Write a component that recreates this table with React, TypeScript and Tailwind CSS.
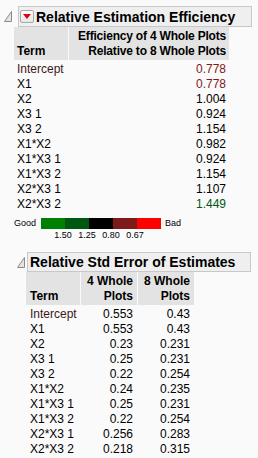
import React from "react";

const efficiency: [string, string][] = [
  ["Intercept", "0.778"],
  ["X1", "0.778"],
  ["X2", "1.004"],
  ["X3 1", "0.924"],
  ["X3 2", "1.154"],
  ["X1*X2", "0.982"],
  ["X1*X3 1", "0.924"],
  ["X1*X3 2", "1.154"],
  ["X2*X3 1", "1.107"],
  ["X2*X3 2", "1.449"],
];

const stdErrors: [string, string, string][] = [
  ["Intercept", "0.553", "0.43"],
  ["X1", "0.553", "0.43"],
  ["X2", "0.23", "0.231"],
  ["X3 1", "0.25", "0.231"],
  ["X3 2", "0.22", "0.254"],
  ["X1*X2", "0.24", "0.235"],
  ["X1*X3 1", "0.25", "0.231"],
  ["X1*X3 2", "0.22", "0.254"],
  ["X2*X3 1", "0.256", "0.283"],
  ["X2*X3 2", "0.218", "0.315"],
];

// colour bins from the legend: >=1.50 green, >=1.25 dark green, >=0.80 black, >=0.67 dark red
function valueColor(v: string) {
  const n = parseFloat(v);
  if (n >= 1.5) return "text-[#008000]";
  if (n >= 1.25) return "text-[#005713]";
  if (n >= 0.8) return "text-black";
  if (n >= 0.67) return "text-[#7f1a1a]";
  return "text-[#ff0000]";
}

function Disclosure() {
  return (
    <svg width="9" height="11" viewBox="0 0 9 11" className="shrink-0">
      <polygon points="7.5,0.5 7.5,10.5 0.5,10.5" fill="#e4e4e4" stroke="#8a8a8a" strokeWidth="1" />
    </svg>
  );
}

function MenuButton() {
  return (
    <div className="flex h-[13px] w-[14px] shrink-0 items-center justify-center rounded-[2px] border border-[#a8a8a8] bg-gradient-to-b from-[#fdfdfd] to-[#e6e6e6]">
      <svg width="8" height="5" viewBox="0 0 8 5">
        <polygon points="0,0 8,0 4,5" fill="#e3000f" />
      </svg>
    </div>
  );
}

export default function App() {
  return (
    <div className="h-[458px] w-[258px] overflow-hidden bg-[#fafafa] pt-[6px] text-[12px] leading-[15px] text-black [font-family:'Liberation_Sans',Arial,sans-serif]">
      {/* Relative Estimation Efficiency */}
      <div className="flex items-center pl-[4px]">
        <Disclosure />
        <div className="ml-[5px] flex h-[21px] w-[234px] items-center border border-[#c8c8c8] bg-[#efefef] pl-[1px]">
          <MenuButton />
          <span className="ml-[2px] text-[14px] font-bold leading-none">Relative Estimation Efficiency</span>
        </div>
      </div>

      <div className="pl-[14px]">
        <div className="flex h-[33px] w-[215px] gap-px font-bold">
          <div className="flex w-[54px] items-end bg-[#e3e3e3] pb-[1px] pl-[3px]">Term</div>
          <div className="flex flex-1 flex-col items-end bg-[#e3e3e3] pr-[3px] pt-[2px] tracking-[-0.2px]">
            <span>Efficiency of 4 Whole Plots</span>
            <span>Relative to 8 Whole Plots</span>
          </div>
        </div>
        <div className="mt-[2px] w-[215px]">
          {efficiency.map(([term, v]) => (
            <div key={term} className="flex h-[15px] items-center">
              <span className={`pl-[3px] ${term === "Intercept" ? "text-[#3a1818]" : ""}`}>{term}</span>
              <span className={`ml-auto pr-[3px] ${valueColor(v)}`}>{v}</span>
            </div>
          ))}
        </div>

        {/* legend */}
        <div className="mt-[6px] flex h-[11px] items-center text-[9px] leading-none">
          <span className="w-[27px]">Good</span>
          <div className="flex h-[11px]">
            <div className="w-[24px] bg-[#008000]" />
            <div className="w-[24px] bg-[#005713]" />
            <div className="w-[24px] bg-black" />
            <div className="w-[24px] bg-[#7f1a1a]" />
            <div className="w-[24px] bg-[#ff0000]" />
          </div>
          <span className="ml-[4px]">Bad</span>
        </div>
        <div className="flex h-[12px] items-center pl-[37px] text-[9px] leading-none">
          {["1.50", "1.25", "0.80", "0.67"].map((n) => (
            <span key={n} className="w-[24px] text-center">
              {n}
            </span>
          ))}
        </div>
      </div>

      {/* Relative Std Error of Estimates */}
      <div className="mt-[11px] flex items-center pl-[17px]">
        <Disclosure />
        <div className="ml-[1px] flex h-[20px] w-[224px] items-center border border-[#c8c8c8] bg-[#efefef] pl-[2px]">
          <span className="text-[14px] font-bold leading-none">Relative Std Error of Estimates</span>
        </div>
      </div>

      <div className="pl-[26px]">
        <div className="flex h-[33px] w-[168px] gap-px font-bold">
          <div className="flex w-[54px] items-end bg-[#e3e3e3] pb-[1px] pl-[4px]">Term</div>
          <div className="flex w-[56px] flex-col items-end justify-end bg-[#e3e3e3] pb-[1px] pr-[4px]">
            <span>4 Whole</span>
            <span>Plots</span>
          </div>
          <div className="flex w-[56px] flex-col items-end justify-end bg-[#e3e3e3] pb-[1px] pr-[4px]">
            <span>8 Whole</span>
            <span>Plots</span>
          </div>
        </div>
        <div className="mt-[2px] w-[168px]">
          {stdErrors.map(([term, a, b]) => (
            <div key={term} className="flex h-[15px] items-center">
              <span className={`w-[55px] pl-[4px] ${term === "Intercept" ? "text-[#3a1818]" : ""}`}>{term}</span>
              <span className="w-[56px] pr-[4px] text-right">{a}</span>
              <span className="w-[57px] pr-[4px] text-right">{b}</span>
            </div>
          ))}
        </div>
      </div>
    </div>
  );
}
